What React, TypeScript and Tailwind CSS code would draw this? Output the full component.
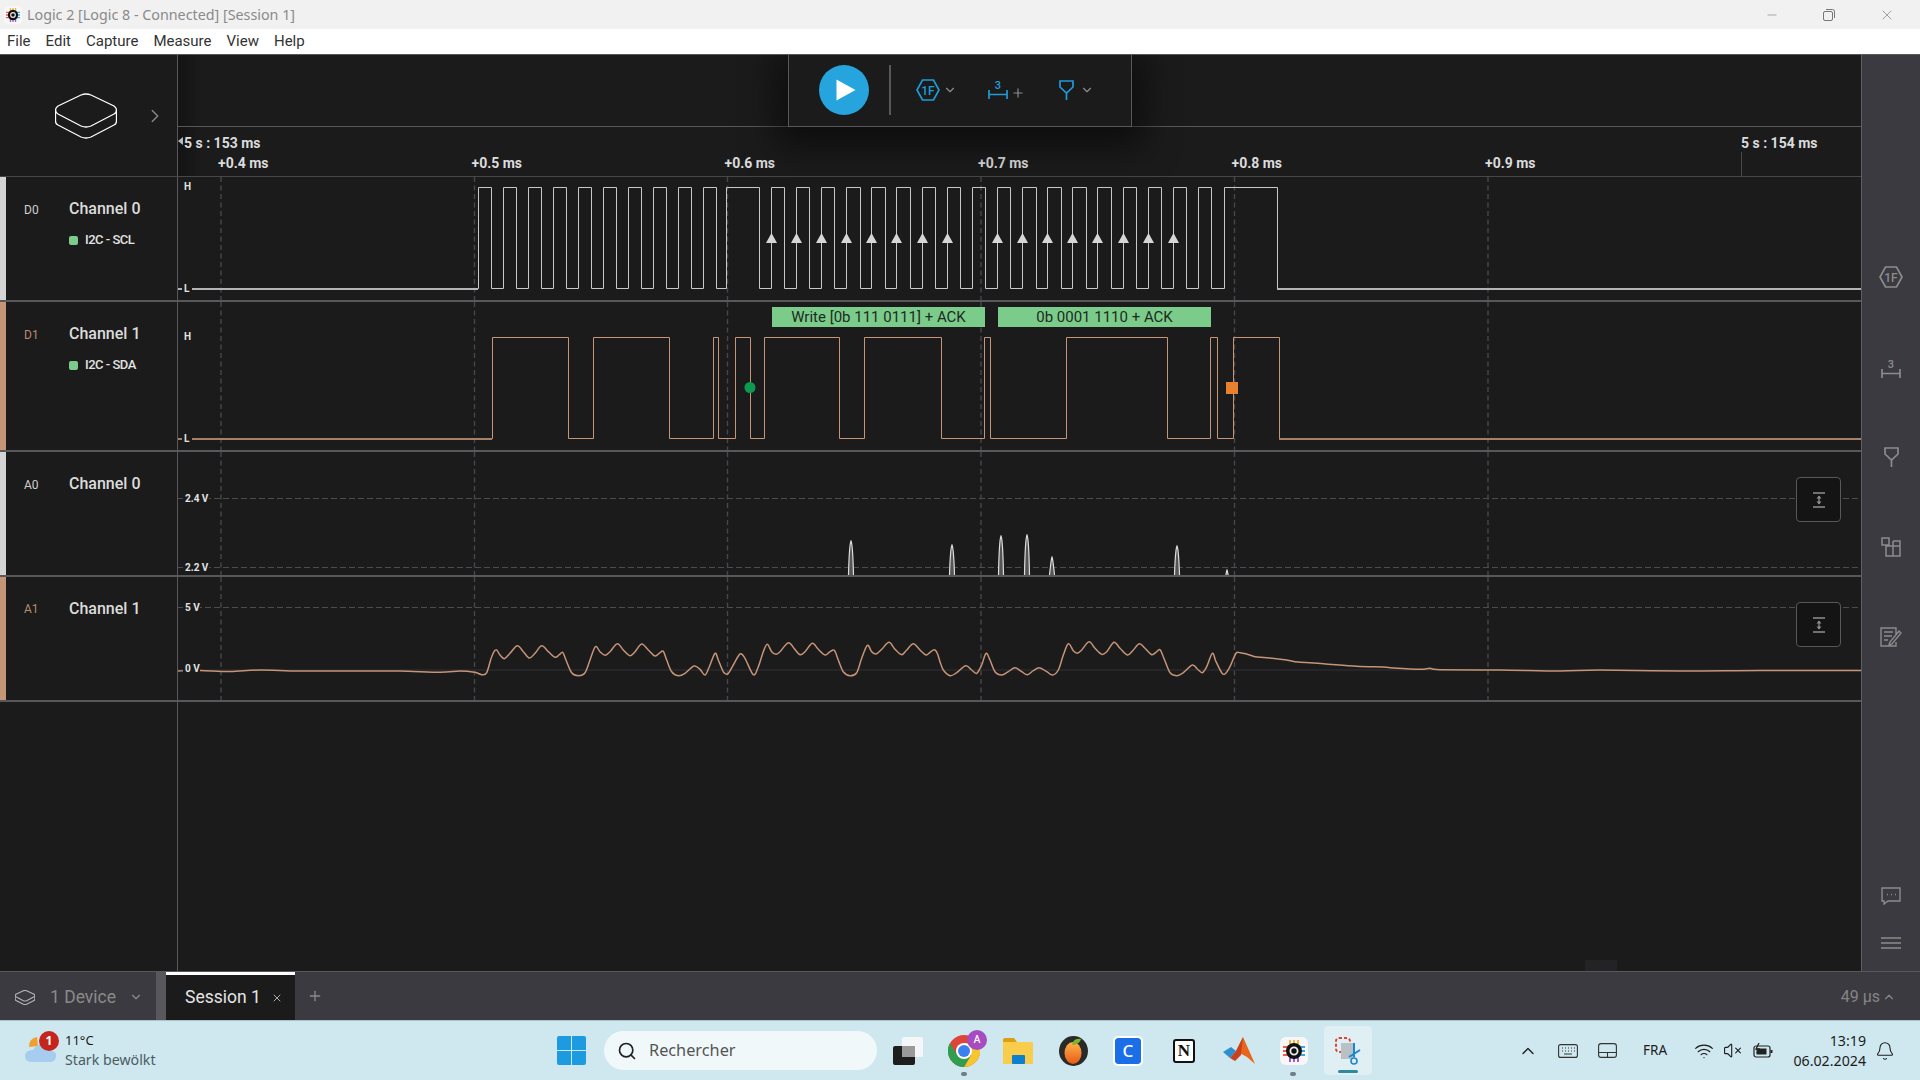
import { Bell, ChevronDown, ChevronRight, ChevronUp, Minus, Plus, Search, VolumeX, Wifi, X } from "lucide-react";

const TICKS = [221, 474.5, 727.5, 981, 1234.5, 1488];
const TICK_LABELS = ["+0.4 ms", "+0.5 ms", "+0.6 ms", "+0.7 ms", "+0.8 ms", "+0.9 ms"];

const SCL_EDGES = [
  478, 490.5, 503, 515.5, 528, 540.5, 553, 565.5, 578, 590.5, 603, 615.5, 628, 640.5, 653, 665.5, 678, 690.5, 703, 715.5,
  726, 759, 771, 784, 796, 809, 821, 834, 846, 860, 871, 885, 896, 910, 922, 935, 947, 960, 972, 985, 997, 1010, 1022,
  1036, 1047, 1061, 1072, 1086, 1097, 1111, 1123, 1136, 1148, 1161, 1173, 1186, 1198, 1211, 1224, 1277,
];
const SDA_EDGES = [
  492, 568, 593, 669, 713, 718, 735, 750, 764, 839, 864, 941, 984, 990, 1066, 1167, 1210, 1217, 1233, 1279,
];
const ARROWS = [771, 796, 821, 846, 871, 896, 922, 947, 997, 1022, 1047, 1072, 1097, 1123, 1148, 1173];
const SPIKES: [number, number][] = [
  [851, 541],
  [952, 545],
  [1001, 536],
  [1027, 535],
  [1052, 557],
  [1177, 546],
  [1227, 570],
];

const WAVE_A: [number, number][] = [
  [0, 457], [60, 453], [104, 457], [125, 464], [140, 458], [155, 410], [168, 389], [180, 405], [193, 416], [210, 400], [232, 377], [250, 395],
  [268, 414], [285, 400], [305, 377], [325, 395], [345, 412], [358, 404], [368, 397], [378, 420], [395, 458], [415, 467], [435, 458], [450, 420],
  [466, 380], [480, 395], [495, 406], [510, 395], [532, 371], [550, 390], [570, 407], [585, 395], [605, 372], [625, 390], [645, 408], [660, 398],
  [670, 394], [680, 420], [695, 455], [715, 467], [735, 460], [762, 438], [780, 448], [795, 465], [808, 440], [825, 400], [835, 420], [850, 455],
  [863, 462], [880, 435], [900, 402], [915, 415], [940, 464], [955, 440], [970, 395], [982, 373], [995, 395], [1008, 403], [1020, 395], [1045, 368],
  [1062, 385], [1080, 404], [1095, 395], [1117, 370], [1135, 388], [1155, 405], [1170, 395], [1183, 391], [1195, 420], [1210, 455], [1230, 467],
  [1250, 458], [1265, 415], [1282, 376], [1295, 395], [1308, 402], [1325, 388], [1347, 367], [1365, 388], [1385, 404], [1400, 390], [1420, 371],
  [1440, 390], [1458, 405], [1470, 397], [1483, 389], [1492, 400],
];
const WAVE_B: [number, number][] = [
  [0, 425], [10, 450], [30, 467], [50, 458], [77, 437], [95, 450], [110, 460], [125, 435], [138, 400], [150, 420], [165, 455], [185, 465], [205, 455],
  [225, 443], [245, 455], [262, 464], [280, 452], [298, 443], [320, 455], [338, 465], [355, 450], [370, 405], [385, 371], [400, 392], [412, 400],
  [425, 390], [447, 365], [465, 385], [485, 403], [500, 395], [522, 367], [540, 385], [562, 405], [578, 392], [598, 371], [615, 385], [635, 404],
  [650, 395], [660, 389], [670, 410], [690, 458], [710, 467], [730, 458], [757, 435], [772, 447], [787, 458], [800, 440], [817, 400], [828, 425],
  [845, 458], [855, 462], [870, 440], [888, 400], [900, 398], [920, 402], [945, 410], [980, 413], [1040, 420], [1075, 426], [1150, 431], [1250, 439],
  [1330, 441], [1360, 444], [1440, 448], [1470, 445], [1500, 449],
];
const WAVE: [number, number][] = [
  [178, 671], [200, 670.5], [230, 671.5], [260, 670], [300, 671], [360, 671], [400, 671],
  ...WAVE_A.map(([x, y]): [number, number] => [440 + x / 3, 520 + y / 3]),
  ...WAVE_B.map(([x, y]): [number, number] => [940 + x / 3, 520 + y / 3]),
  [1500, 670], [1560, 671], [1600, 670], [1680, 671], [1760, 670.5], [1861, 670.5],
];

function stepPath(edges: number[], high: number, low: number, end: number) {
  let d = `M178 ${low}`;
  let level = low;
  for (const edge of edges) {
    const x = Math.round(edge) + 0.5;
    level = level === low ? high : low;
    d += ` H${x} V${level}`;
  }
  return `${d} H${end}`;
}

function smoothPath(points: [number, number][]) {
  let d = `M${points[0][0]} ${points[0][1]}`;
  for (let i = 0; i < points.length - 1; i++) {
    const p0 = points[Math.max(i - 1, 0)];
    const p1 = points[i];
    const p2 = points[i + 1];
    const p3 = points[Math.min(i + 2, points.length - 1)];
    const c1x = p1[0] + (p2[0] - p0[0]) / 6;
    const c1y = p1[1] + (p2[1] - p0[1]) / 6;
    const c2x = p2[0] - (p3[0] - p1[0]) / 6;
    const c2y = p2[1] - (p3[1] - p1[1]) / 6;
    d += ` C${c1x.toFixed(1)} ${c1y.toFixed(1)} ${c2x.toFixed(1)} ${c2y.toFixed(1)} ${p2[0].toFixed(1)} ${p2[1].toFixed(1)}`;
  }
  return d;
}

function DeviceIcon({ className, width = 1.3 }: { className: string; width?: number }) {
  return (
    <svg viewBox="0 0 62 46" className={className} fill="none" stroke="currentColor" strokeWidth={width}>
      <path d="M3 13 L26 2 Q31 0 36 2 L59 13 Q61.5 15 61.5 17 Q61.5 20 59 21 L36 33 Q31 35 26 33 L3 21 Q0.5 19.5 0.5 17 Q0.5 15 3 13 Z" />
      <path d="M0.5 17 V28 Q0.5 31 3 32 L26 44 Q31 46 36 44 L59 32 Q61.5 31 61.5 28 V17" />
    </svg>
  );
}

function HexIcon({ color }: { color: string }) {
  return (
    <svg viewBox="0 0 24 22" width="24" height="22" fill="none" stroke={color} strokeWidth="1.7">
      <path d="M6.5 1 H17.5 L23 11 L17.5 21 H6.5 L1 11 Z" />
      <text x="12" y="15.5" textAnchor="middle" fontSize="12" fontWeight="500" fill={color} stroke="none" fontFamily="Roboto, sans-serif">
        1F
      </text>
    </svg>
  );
}

function RulerIcon({ color }: { color: string }) {
  return (
    <svg viewBox="0 0 20 22" width="20" height="22" fill="none" stroke={color} strokeWidth="1.7">
      <path d="M1 12 V21 M19 12 V21 M1 16.5 H19" />
      <text x="10" y="11" textAnchor="middle" fontSize="11" fontWeight="500" fill={color} stroke="none" fontFamily="Roboto, sans-serif">
        3
      </text>
    </svg>
  );
}

function FunnelIcon({ color }: { color: string }) {
  return (
    <svg viewBox="0 0 15 20" width="15" height="20" fill="none" stroke={color} strokeWidth="1.7">
      <path d="M1 1 H14 V7 L7.5 13 L1 7 Z M7.5 13 V20" />
    </svg>
  );
}

function LogicIcon({ size }: { size: number }) {
  return (
    <svg viewBox="0 0 28 28" width={size} height={size}>
      <rect width="28" height="28" rx="6" fill="#f7f7f7" />
      <path d="M10 3 V8 M14 3 V8 M18 3 V8" stroke="#f2b33a" strokeWidth="2" />
      <path d="M3 10 H8 M3 14 H8 M3 18 H8" stroke="#e8604c" strokeWidth="2" />
      <path d="M20 10 H25 M20 14 H25 M20 18 H25" stroke="#3aa7e0" strokeWidth="2" />
      <path d="M10 20 V25 M14 20 V25 M18 20 V25" stroke="#a25ad9" strokeWidth="2" />
      <circle cx="14" cy="14" r="8" fill="#111" />
      <circle cx="14" cy="14" r="3.6" fill="none" stroke="#eee" strokeWidth="1.8" />
    </svg>
  );
}

function Track({ top, height, children }: { top: number; height: number; children: React.ReactNode }) {
  return (
    <svg viewBox={`178 ${top} 1683 ${height}`} className="absolute inset-0 block h-full w-full" fill="none">
      {TICKS.map((x) => (
        <line key={x} x1={x} x2={x} y1={top} y2={top + height} stroke="#47474b" strokeWidth="1.4" strokeDasharray="5 3.5" />
      ))}
      {children}
    </svg>
  );
}

function AxisLabel({ x, y, label, wide = 0 }: { x: number; y: number; label: string; wide?: number }) {
  return (
    <g>
      {wide > 0 && <rect x={x - 2} y={y - 9} width={wide} height={12} rx="2" fill="#1b1b1c" />}
      <text x={x} y={y} fontSize="10" fontWeight="700" fill="#e2e2e2" fontFamily="Roboto, sans-serif">
        {label}
      </text>
    </g>
  );
}

function RowLabel(props: { id: string; name: string; strip: string; idColor: string; idTop: string; tag?: string }) {
  return (
    <div className="relative w-[178px] shrink-0 border-r border-[#57575c]">
      <div className={`absolute inset-y-0 left-0 w-[6px] ${props.strip}`} />
      <div className={`absolute left-[24px] text-[12px] leading-[14px] ${props.idTop} ${props.idColor}`}>{props.id}</div>
      <div className="absolute left-[69px] top-[23px] text-[16px] leading-[18px] font-medium text-[#dcdcdc]">{props.name}</div>
      {props.tag && (
        <div className="absolute left-[69px] top-[56px] flex items-center gap-[7px]">
          <span className="h-[9px] w-[9px] rounded-[2px] bg-[#7bcb8b]" />
          <span className="text-[13px] leading-[14px] font-medium tracking-[-0.5px] text-[#e2e2e2]">{props.tag}</span>
        </div>
      )}
    </div>
  );
}

function FitButton({ top }: { top: string }) {
  return (
    <div className={`absolute left-[1618px] flex h-[45px] w-[45px] items-center justify-center rounded-[4px] border border-[#57575c] bg-[#141415] ${top}`}>
      <svg viewBox="0 0 14 16" width="14" height="16" fill="none" stroke="#8e8e8e" strokeWidth="1.3">
        <path d="M1 1 H13 M1 15 H13 M7 4 V12" />
        <path d="M4.5 6.5 L7 3.5 L9.5 6.5 Z M4.5 9.5 L7 12.5 L9.5 9.5 Z" fill="#8e8e8e" stroke="none" />
      </svg>
    </div>
  );
}

function Toolbar() {
  return (
    <div className="absolute left-[610px] top-0 z-10 flex h-[72px] w-[344px] items-center border-x border-b border-[#57575c] bg-[#1b1b1c] pb-[1px] pl-[30px] shadow-[0_8px_34px_12px_rgba(0,0,0,0.5)]">
      <div className="flex h-[50px] w-[50px] items-center justify-center rounded-full bg-[#26a4dd]">
        <svg viewBox="0 0 20 22" width="20" height="22" className="ml-[3px]">
          <path d="M0.5 0.5 L19.5 11 L0.5 21.5 Z" fill="#fff" />
        </svg>
      </div>
      <div className="ml-[20px] h-[50px] w-[2px] bg-[#57575c]" />
      <div className="ml-[25px]">
        <HexIcon color="#1f9bd8" />
      </div>
      <ChevronDown className="ml-[3px] h-[14px] w-[14px] text-[#8c8c8c]" />
      <div className="ml-[31px] mt-[-2px]">
        <RulerIcon color="#1f9bd8" />
      </div>
      <Plus className="ml-[3px] mt-[5px] h-[14px] w-[14px] text-[#8c8c8c]" />
      <div className="ml-[34px]">
        <FunnelIcon color="#1f9bd8" />
      </div>
      <ChevronDown className="ml-[6px] h-[14px] w-[14px] text-[#8c8c8c]" />
    </div>
  );
}

function Ruler() {
  return (
    <div className="relative h-[49px] text-[14px] leading-[16px] font-bold text-[#dcdcdc]">
      <div className="absolute left-0 top-[10px] h-0 w-0 border-y-[4px] border-r-[5px] border-y-transparent border-r-[#bdbdbd]" />
      <div className="absolute left-[6px] top-[8px]">5 s : 153 ms</div>
      <div className="absolute left-[1563px] top-[8px]">5 s : 154 ms</div>
      <div className="absolute left-[1563px] top-[25px] h-[24px] w-px bg-[#47474b]" />
      {TICK_LABELS.map((label, i) => (
        <div key={label} className="absolute top-[28px]" style={{ left: TICKS[i] - 181 }}>
          {label}
        </div>
      ))}
    </div>
  );
}

function Rows() {
  return (
    <>
      <div className="flex h-[125px] border-b-2 border-[#57575c]">
        <RowLabel id="D0" name="Channel 0" strip="bg-[#d4d4d4]" idColor="text-[#cfcfcf]" idTop="top-[26px]" tag="I2C - SCL" />
        <div className="relative flex-1">
          <Track top={177} height={123}>
            <path d={stepPath(SCL_EDGES, 187.5, 288.5, 1861)} stroke="#c8c8c8" strokeWidth="1" />
            <path d="M178 289 H478 M1277 289 H1861" stroke="#b4b4b4" strokeWidth="2" />
            {ARROWS.map((x) => (
              <path key={x} d={`M${x + 0.5} 233 L${x + 6} 243 H${x - 5} Z`} fill="#d6d6d6" />
            ))}
            <AxisLabel x={184} y={190} label="H" />
            <rect x="182" y="283" width="10" height="11" fill="#1b1b1c" />
            <AxisLabel x={184} y={292} label="L" />
          </Track>
        </div>
      </div>
      <div className="flex h-[150px] border-b-2 border-[#57575c]">
        <RowLabel id="D1" name="Channel 1" strip="bg-[#c69477]" idColor="text-[#b98a70]" idTop="top-[26px]" tag="I2C - SDA" />
        <div className="relative flex-1">
          <Track top={302} height={148}>
            <path d={stepPath(SDA_EDGES, 337.5, 438.5, 1861)} stroke="#c69477" strokeWidth="1" />
            <path d="M178 439 H492 M1279 439 H1861" stroke="#a87f68" strokeWidth="2" />
            <circle cx="750" cy="387.5" r="5.5" fill="#0b9a50" />
            <rect x="1226" y="382" width="12" height="12" fill="#e8812f" />
            <AxisLabel x={184} y={340} label="H" />
            <rect x="182" y="433" width="10" height="11" fill="#1b1b1c" />
            <AxisLabel x={184} y={442} label="L" />
          </Track>
          <div className="absolute left-[594px] top-[5px] flex h-[20px] w-[213px] items-center justify-center bg-[#7bcb8b] text-[15px] text-[#1d2b21]">
            Write [0b 111 0111] + ACK
          </div>
          <div className="absolute left-[820px] top-[5px] flex h-[20px] w-[213px] items-center justify-center bg-[#7bcb8b] text-[15px] text-[#1d2b21]">
            0b 0001 1110 + ACK
          </div>
        </div>
      </div>
      <div className="flex h-[125px] border-b-2 border-[#57575c]">
        <RowLabel id="A0" name="Channel 0" strip="bg-[#d4d4d4]" idColor="text-[#cfcfcf]" idTop="top-[26px]" />
        <div className="relative flex-1">
          <Track top={452} height={123}>
            <path d="M178 498.5 H1861 M178 567.5 H1861" stroke="#4c4c50" strokeWidth="1" strokeDasharray="6 3" />
            {SPIKES.map(([x, y]) => (
              <path key={x} d={`M${x - 2.5} 575 C${x - 2} ${y + 14} ${x - 1} ${y + 2} ${x} ${y} C${x + 1} ${y + 2} ${x + 2} ${y + 14} ${x + 2.5} 575`} fill="#555" stroke="#dedede" strokeWidth="1.2" />
            ))}
            <AxisLabel x={185} y={502} label="2.4 V" wide={26} />
            <AxisLabel x={185} y={571} label="2.2 V" wide={26} />
          </Track>
          <FitButton top="top-[25px]" />
        </div>
      </div>
      <div className="flex h-[125px] border-b-2 border-[#57575c]">
        <RowLabel id="A1" name="Channel 1" strip="bg-[#c69477]" idColor="text-[#b98a70]" idTop="top-[25px]" />
        <div className="relative flex-1">
          <Track top={577} height={123}>
            <path d="M178 607.5 H1861" stroke="#4c4c50" strokeWidth="1" strokeDasharray="6 3" />
            <path d="M178 670 H1861" stroke="#2a2a2f" strokeWidth="1.5" />
            <path d={smoothPath(WAVE)} stroke="#c69477" strokeWidth="1.5" />
            <AxisLabel x={185} y={611} label="5 V" wide={17} />
            <AxisLabel x={185} y={672} label="0 V" wide={17} />
          </Track>
          <FitButton top="top-[25px]" />
        </div>
      </div>
    </>
  );
}

function Sidebar() {
  return (
    <div className="flex w-[59px] shrink-0 flex-col items-center gap-[66px] border-l border-[#5f5f64] bg-[#3b3a40] pb-[16px] pt-[210px]">
      <div className="flex h-[24px] items-center">
        <HexIcon color="#8c8c8c" />
      </div>
      <div className="flex h-[24px] items-center pt-[1px]">
        <RulerIcon color="#8c8c8c" />
      </div>
      <div className="flex h-[24px] items-center">
        <FunnelIcon color="#8c8c8c" />
      </div>
      <svg viewBox="0 0 20 20" width="20" height="20" fill="none" stroke="#8c8c8c" strokeWidth="1.5" className="h-[24px]">
        <path d="M1 1 H8 V8 H1 Z M5 9 H19 V19 H5 Z M12 4 H19 V9 M12 4 V19" />
      </svg>
      <svg viewBox="0 0 22 20" width="22" height="20" fill="none" stroke="#8c8c8c" strokeWidth="1.4" className="h-[24px]">
        <path d="M16 7 V1 H1 V19 H16 V15 M4 5 H13 M4 9 H12 M4 13 H8 M10 15 L9 18 L12 17 L21 6 L19 4 Z" />
      </svg>
      <div className="mt-auto flex h-[24px] items-center">
        <svg viewBox="0 0 20 18" width="20" height="18" fill="none" stroke="#8c8c8c" strokeWidth="1.4">
          <path d="M1 1 H19 V14 H7 L3 17 V14 H1 Z M6 7.5 H7 M10 7.5 H11 M14 7.5 H15" />
        </svg>
      </div>
      <div className="-mt-[43px] flex h-[24px] items-center">
        <svg viewBox="0 0 20 12" width="20" height="12" stroke="#8c8c8c" strokeWidth="1.6">
          <path d="M0 1 H20 M0 6 H20 M0 11 H20" />
        </svg>
      </div>
    </div>
  );
}

function TabBar() {
  return (
    <div className="flex h-[49px] shrink-0 items-stretch border-t border-[#57575c] bg-[#3b3a40] text-[17.5px]">
      <div className="flex w-[156px] items-center pl-[15px] pt-[2px] text-[#8a8a8a]">
        <DeviceIcon className="h-[15px] w-[20px] text-[#b5b5b5]" width={3.5} />
        <span className="ml-[15px]">1 Device</span>
        <ChevronDown className="ml-[13px] h-[14px] w-[14px]" />
      </div>
      <div className="w-[10px] bg-[#57575c]" />
      <div className="flex w-[129px] items-center border-t-[3px] border-white bg-[#1b1b1c] pl-[19px] text-[#e4e4e4]">
        <span>Session 1</span>
        <X className="ml-[10px] h-[12px] w-[12px] text-[#aaa]" />
      </div>
      <div className="flex items-center pl-[12px]">
        <Plus className="h-[16px] w-[16px] text-[#8a8a8a]" />
      </div>
      <div className="ml-auto flex items-center pr-[24px] pt-[2px] text-[16px] text-[#858585]">
        <span>49 µs</span>
        <ChevronUp className="ml-[2px] h-[14px] w-[14px]" />
      </div>
    </div>
  );
}

function Taskbar() {
  return (
    <div className="flex h-[60px] shrink-0 items-center border-t border-[#a9c3ca] bg-[#cfe8ef] font-['Noto_Sans',sans-serif] text-[#1c1c1c]">
      <div className="flex w-[557px] shrink-0 items-center pl-[25px]">
        <div className="relative -mt-[6px] h-[34px] w-[32px]">
          <svg viewBox="0 0 32 34" width="32" height="34">
            <path d="M12 6 A9 9 0 0 0 4 16 L13 15 Z" fill="#f0a030" />
            <path d="M7 31 Q0 31 0 25 Q0 19 8 19 Q11 13 19 14 Q27 15 27 20 Q32 21 31 26 Q30 31 25 31 Z" fill="#a6cdf0" />
          </svg>
          <div className="absolute -right-[2px] top-0 flex h-[20px] w-[20px] items-center justify-center rounded-full bg-[#c4261d] text-[12px] font-bold text-white">1</div>
        </div>
        <div className="ml-[8px]">
          <div className="-mt-[2px] text-[13px] leading-[20px]">11°C</div>
          <div className="text-[14.2px] leading-[20px] text-[#4b5c63]">Stark bewölkt</div>
        </div>
      </div>
      <svg viewBox="0 0 29 29" width="29" height="29" className="shrink-0">
        <path d="M0 2 Q0 0 2 0 H14 V14 H0 Z M15 0 H27 Q29 0 29 2 V14 H15 Z M0 15 H14 V29 H2 Q0 29 0 27 Z M15 15 H29 V27 Q29 29 27 29 H15 Z" fill="#1c9be0" />
      </svg>
      <div className="ml-[18px] flex h-[39px] w-[273px] shrink-0 items-center rounded-full bg-[#f0f8fa] pl-[13px] text-[16.3px] text-[#555]">
        <Search className="h-[20px] w-[20px] text-[#222]" />
        <span className="ml-[12px]">Rechercher</span>
      </div>
      <svg viewBox="0 0 30 28" width="30" height="28" className="ml-[16px] shrink-0">
        <rect x="0" y="9" width="22" height="19" rx="2" fill="#1d1d1d" />
        <rect x="9" y="0" width="21" height="20" rx="2" fill="#f4f6f7" />
        <rect x="9" y="9" width="13" height="11" fill="#9a9a9a" />
      </svg>
      <div className="relative ml-[25px] h-[32px] w-[32px] shrink-0">
        <svg viewBox="0 0 32 32" width="32" height="32">
          <circle cx="16" cy="16" r="16" fill="#de4437" />
          <path d="M29.9 8 A16 16 0 0 1 16 32 L23 20 Z M16 8 H29.9 L23 20 Z" fill="#f7c52d" />
          <path d="M2.1 8 A16 16 0 0 0 16 32 L23 20 L9 20 Z" fill="#2f9e4f" />
          <circle cx="16" cy="16" r="8" fill="#fff" />
          <circle cx="16" cy="16" r="6" fill="#3b80ee" />
        </svg>
        <div className="absolute -right-[7px] -top-[5px] flex h-[20px] w-[20px] items-center justify-center rounded-full bg-[#a64bc0] text-[10px] font-medium text-white">A</div>
        <div className="absolute left-[13px] top-[37px] h-[4px] w-[6px] rounded-full bg-[#6e7f85]" />
      </div>
      <svg viewBox="0 0 30 26" width="30" height="26" className="ml-[23px] shrink-0">
        <path d="M0 2 Q0 0 2 0 H11 L14 4 H0 Z" fill="#dc9f10" />
        <rect x="0" y="4" width="30" height="22" rx="1" fill="#f9cd4c" />
        <rect x="9" y="17" width="13" height="9" rx="1" fill="#0b7fd0" />
      </svg>
      <svg viewBox="0 0 29 30" width="29" height="30" className="ml-[26px] shrink-0">
        <defs>
          <linearGradient id="fruit" x1="0" y1="0" x2="0" y2="1">
            <stop offset="0" stopColor="#ffb34d" />
            <stop offset="1" stopColor="#e85a15" />
          </linearGradient>
        </defs>
        <ellipse cx="14.5" cy="15" rx="14.5" ry="15" fill="#2a2a28" />
        <ellipse cx="14" cy="17" rx="8.5" ry="11" fill="url(#fruit)" />
        <path d="M13 8 Q15 2 22 3 Q21 8 14 9 Z" fill="#7ab52b" />
      </svg>
      <div className="ml-[27px] flex h-[26px] w-[26px] shrink-0 items-center justify-center rounded-[3px] bg-[#1a6ee8] text-[17px] font-medium text-white outline outline-2 outline-white">C</div>
      <div className="ml-[32px] flex h-[24px] w-[22px] shrink-0 items-center justify-center rounded-[3px] border-2 border-[#111] bg-white font-['Liberation_Serif',serif] text-[17px] font-bold text-[#111]">N</div>
      <svg viewBox="0 0 32 27" width="32" height="27" className="ml-[28px] shrink-0">
        <path d="M0 15 L8 10 L13 14 L7 21 Z" fill="#2d8fd0" />
        <path d="M13 14 L20 0 L32 27 L24 20 Z" fill="#e8661c" />
        <path d="M13 14 L20 0 L18 18 L12 24 L7 21 Z" fill="#c9411d" />
      </svg>
      <div className="relative ml-[25px] h-[28px] w-[27px] shrink-0">
        <LogicIcon size={28} />
        <div className="absolute left-[10px] top-[35px] h-[4px] w-[6px] rounded-full bg-[#6e7f85]" />
      </div>
      <div className="relative ml-[17px] flex h-[49px] w-[48px] shrink-0 items-center justify-center rounded-[4px] bg-[#e0eff3]">
        <svg viewBox="0 0 26 28" width="26" height="28">
          <rect x="1" y="1" width="14" height="14" rx="3" fill="none" stroke="#e0442e" strokeWidth="2" strokeDasharray="3 2" />
          <rect x="6" y="6" width="12" height="16" fill="#b8c1c5" />
          <path d="M19 6 V20 M25 13 L14 20" stroke="#1c86d1" strokeWidth="2" />
          <circle cx="19" cy="24" r="3" fill="none" stroke="#1c86d1" strokeWidth="1.6" />
        </svg>
        <div className="absolute left-[14px] top-[44px] h-[3px] w-[20px] rounded-full bg-[#2d8a9a]" />
      </div>
      <ChevronUp className="ml-[146px] h-[20px] w-[20px] shrink-0" strokeWidth={1.6} />
      <svg viewBox="0 0 20 14" width="20" height="14" fill="none" stroke="#333" strokeWidth="1.1" className="ml-[20px] shrink-0">
        <rect x="0.6" y="0.6" width="18.8" height="12.8" rx="2" />
        <path d="M4 4 H5 M7 4 H8 M10 4 H11 M13 4 H14 M16 4 H17 M4 7 H5 M7 7 H8 M10 7 H11 M13 7 H14 M16 7 H17 M6 10 H14" />
      </svg>
      <svg viewBox="0 0 19 15" width="19" height="15" fill="none" stroke="#333" strokeWidth="1.1" className="ml-[20px] shrink-0">
        <rect x="0.6" y="0.6" width="17.8" height="13.8" rx="2.5" />
        <path d="M1 9.5 H18 M9.5 9.5 V14" />
      </svg>
      <span className="ml-[26px] w-[26px] shrink-0 text-[13.5px]">FRA</span>
      <Wifi className="ml-[25px] h-[20px] w-[20px] shrink-0" strokeWidth={1.4} />
      <VolumeX className="ml-[9px] h-[19px] w-[19px] shrink-0" strokeWidth={1.4} />
      <svg viewBox="0 0 20 16" width="20" height="16" className="ml-[11px] shrink-0" fill="none" stroke="#222" strokeWidth="1.2">
        <rect x="1" y="3" width="16" height="11" rx="2" />
        <rect x="3.5" y="5.5" width="10" height="6" fill="#222" stroke="none" />
        <path d="M18.5 7 V10" strokeWidth="2" />
        <path d="M6 0 L3 6 H6 L4 10" strokeWidth="1.3" />
      </svg>
      <div className="w-[93px] shrink-0 whitespace-nowrap text-right text-[14.2px] leading-[20px]">
        <div>13:19</div>
        <div>06.02.2024</div>
      </div>
      <Bell className="ml-[9px] h-[20px] w-[20px] shrink-0" strokeWidth={1.3} />
    </div>
  );
}

export default function App() {
  return (
    <div className="flex h-[1080px] w-[1920px] flex-col overflow-hidden bg-[#1b1b1c] font-[Roboto,sans-serif]">
      <div className="flex h-[29px] shrink-0 items-center bg-[#f1f1f1] pl-[4px] font-['Noto_Sans',sans-serif] text-[14.3px] text-[#8a8a8a]">
        <LogicIcon size={18} />
        <span className="ml-[5px]">Logic 2 [Logic 8 - Connected] [Session 1]</span>
        <div className="ml-auto flex items-center text-[#777]">
          <Minus className="h-[14px] w-[14px]" strokeWidth={1} />
          <svg viewBox="0 0 12 12" width="12" height="12" fill="none" stroke="#777" className="ml-[44px]">
            <rect x="0.5" y="2.5" width="9" height="9" rx="1.5" />
            <path d="M3 0.5 H9.5 Q11.5 0.5 11.5 2.5 V9" />
          </svg>
          <X className="ml-[44px] mr-[25px] h-[16px] w-[16px]" strokeWidth={1} />
        </div>
      </div>
      <div className="flex h-[25px] shrink-0 items-center gap-[15px] bg-white pl-[7px] text-[15px] text-[#333]">
        <span>File</span>
        <span>Edit</span>
        <span>Capture</span>
        <span>Measure</span>
        <span>View</span>
        <span>Help</span>
      </div>
      <div className="flex min-h-0 flex-1 overflow-hidden border-t border-[#57575c]">
        <div className="flex min-w-0 flex-1 flex-col">
          <div className="flex h-[122px] shrink-0 border-b border-[#47474b]">
            <div className="flex w-[178px] shrink-0 items-center border-r border-[#57575c] pl-[55px]">
              <DeviceIcon className="h-[46px] w-[62px] text-white" />
              <ChevronRight className="ml-[27px] h-[22px] w-[22px] text-[#8a8a8a]" strokeWidth={1.5} />
            </div>
            <div className="relative flex-1">
              <div className="absolute inset-y-0 left-0 w-[24px] bg-gradient-to-r from-black/30 to-transparent" />
              <div className="relative h-[72px] border-b border-[#57575c]">
                <Toolbar />
              </div>
              <Ruler />
            </div>
          </div>
          <Rows />
          <div className="flex flex-1">
            <div className="w-[178px] shrink-0 border-r border-[#57575c]" />
            <div className="relative flex-1">
              <div className="absolute bottom-0 left-[1407px] h-[11px] w-[32px] bg-[#232325]" />
            </div>
          </div>
        </div>
        <Sidebar />
      </div>
      <TabBar />
      <Taskbar />
    </div>
  );
}
